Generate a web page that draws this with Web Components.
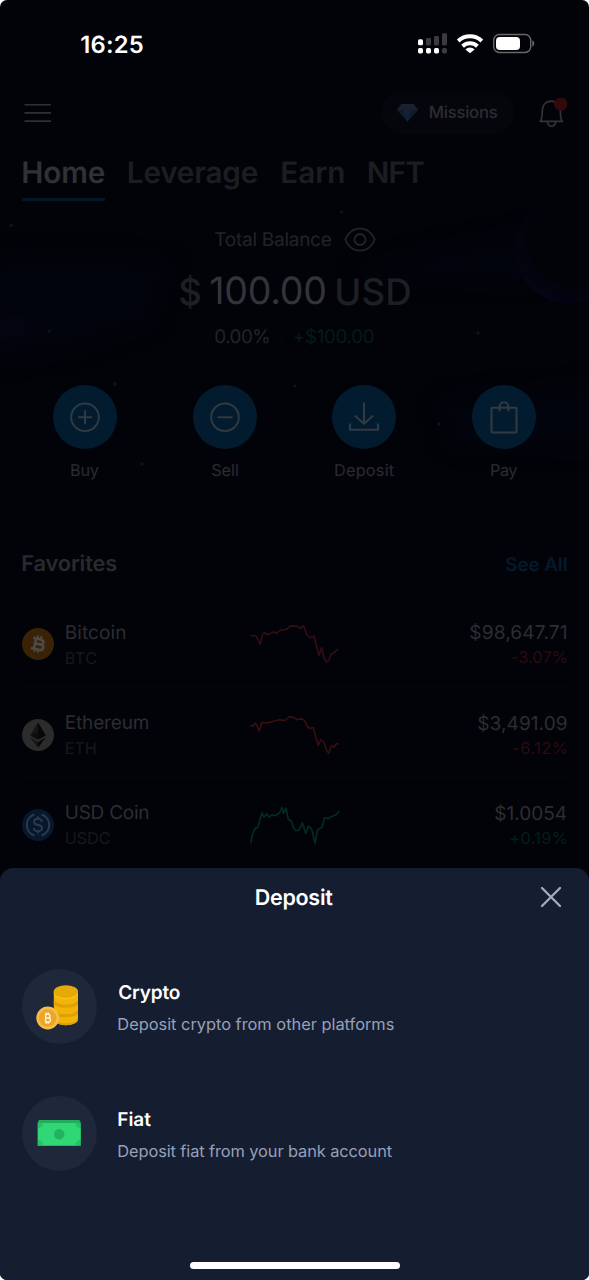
<!DOCTYPE html>
<html lang="en">
<head>
<meta charset="utf-8">
<title>Wallet</title>
<style>
html,body{margin:0;background:#fff}
body{width:589px;height:1280px;overflow:hidden;font-family:Inter,"Liberation Sans",sans-serif;text-rendering:geometricPrecision}
</style>
</head>
<body>
<wallet-app></wallet-app>

<script>
/* Single line of text whose tracking is adjusted so its ink spans `w` pixels. */
const ctx = document.createElement('canvas').getContext('2d');
class UiText extends HTMLElement {
  connectedCallback() {
    if (this.shadowRoot) return;
    const w = +this.getAttribute('w'), size = +this.getAttribute('s'), weight = this.getAttribute('wt') || 400;
    const text = this.textContent;
    ctx.font = `${weight} ${size}px Inter, "Liberation Sans", sans-serif`;
    ctx.textRendering = 'geometricPrecision';
    const m = ctx.measureText(text);
    const ink = m.actualBoundingBoxLeft + m.actualBoundingBoxRight;
    const track = (w - .6 - ink) / Math.max(1, text.length - 1);
    const root = this.attachShadow({ mode: 'open' });
    root.innerHTML = `<style>
      :host{display:block;width:${w}px;height:${Math.ceil(size * 1.2)}px;line-height:${Math.ceil(size * 1.2)}px;flex:none;
        font-size:${size}px;font-weight:${weight};color:${this.getAttribute('c') || '#fff'};white-space:pre}
      span{display:block;width:${w + 14}px;margin-left:${m.actualBoundingBoxLeft + .3}px;letter-spacing:${track.toFixed(3)}px}
    </style><span><slot></slot></span>`;
  }
}

const define = (name, html) => customElements.define(name, class extends HTMLElement {
  connectedCallback() {
    if (this.shadowRoot) return;
    const t = document.createElement('template');
    t.innerHTML = typeof html === 'function' ? html(this) : html;
    this.attachShadow({ mode: 'open' }).append(t.content.cloneNode(true));
  }
});

define('status-bar', `<style>
  :host{display:flex;box-sizing:border-box;height:88px;padding:0 54px 0 81px;align-items:center;justify-content:space-between}
  div{display:flex;align-items:center}
</style>
<ui-text w="62" s="23.800" wt="600">16:25</ui-text>
<div><svg width="118" height="24" viewBox="417 32 118 24">
  <g fill="#fff"><rect x="418" y="39.300" width="5" height="6" rx="1.500"/><rect x="418" y="48" width="5" height="5.400" rx="1.700"/><rect x="426" y="48" width="5" height="5.400" rx="1.700"/><rect x="434" y="48" width="5" height="5.400" rx="1.700"/></g>
  <g fill="#3b3b3e"><rect x="426" y="38" width="5" height="7.400" rx="1.300"/><rect x="434" y="36" width="5" height="9.400" rx="1.300"/><rect x="442" y="33.200" width="5" height="12.200" rx="1.300"/><rect x="442" y="48" width="5" height="5.400" rx="1.700"/></g>
  <g fill="none" stroke="#fff" stroke-width="4"><path d="M458.200 41a17 17 0 0 1 23.600 0"/><path d="M462.600 46.200a10.800 10.800 0 0 1 14.800 0"/></g>
  <path d="M465.400 49.400a6.500 6.500 0 0 1 9.200 0L470 53.300z" fill="#fff"/>
  <rect x="493.700" y="34.500" width="37" height="18" rx="5.600" fill="none" stroke="#68686b" stroke-width="1.400"/>
  <rect x="496" y="37" width="24" height="13" rx="3.800" fill="#fff"/>
  <path d="M532.300 40.300c2.600 1 2.600 5.400 0 6.400z" fill="#68686b"/>
</svg></div>`);

define('top-bar', `<style>
  :host{display:flex;box-sizing:border-box;height:49px;padding:0 21px 0 24px;align-items:center}
  svg{display:block;flex:none}
  .pill{display:flex;box-sizing:border-box;margin-left:auto;width:133px;height:43px;border-radius:22px;background:#05060b;align-items:center;padding-left:16px;gap:11.500px}
  .pill ui-text{margin-top:1px}
  .bell{margin-left:24px}
</style>
<svg width="28" height="20" viewBox="0 0 28 20" stroke="#2f3033" stroke-width="1.600"><path d="M.5 1.700h26.500M.5 9.900h26.500M.5 18.100h26.500"/></svg>
<div class="pill">
  <svg width="21" height="18" viewBox="0 0 21 18"><path d="M4.600 0h11.800L21 6 10.500 18 0 6z" fill="#111a2c"/><path d="M4.600 0h11.800L21 6H0z" fill="#182332"/><path d="M4.600 0 6 6l4.500-6L15 6l1.400-6L21 6H15l-4.500 12L6 6H0z" fill="#1e1e30"/><path d="M6 6h9l-4.500 12z" fill="#142035"/></svg>
  <ui-text w="68.500" s="16.700" wt="500" c="#2c2d31">Missions</ui-text>
</div>
<svg class="bell" width="30" height="30" viewBox="538 97 30 30"><g fill="none" stroke="#323337" stroke-width="1.700" stroke-linejoin="round"><path d="M540.200 120.300c1.700-1.600 1.900-3.500 1.900-8.300 0-7.300 3.300-11.800 9.200-11.800s9.200 4.500 9.200 11.800c0 4.800.2 6.700 1.900 8.300z"/><path d="M547.500 121c.3 2.800 1.800 4.200 4 4.200s3.700-1.400 4-4.200"/></g><circle cx="560.700" cy="103.200" r="6.600" fill="#34090e"/></svg>`);

define('tab-bar', `<style>
  :host{display:flex;box-sizing:border-box;height:71px;padding:18px 22px 0;align-items:flex-start}
  .on{box-sizing:border-box;width:83px;height:46px;border-bottom:3px solid #051626;padding-left:1px}
  .t{margin-left:23.500px}.u{margin-left:24px}
</style>
<div class="on"><ui-text w="82" s="29.700" wt="600" c="#303135">Home</ui-text></div>
<ui-text class="t" w="129.500" s="29.700" wt="600" c="#1c1d21">Leverage</ui-text>
<ui-text class="u" w="62.500" s="29.700" wt="600" c="#1c1d21">Earn</ui-text>
<ui-text class="u" w="56" s="29.700" wt="600" c="#1c1d21">NFT</ui-text>`);

define('night-sky', `<style>:host{display:block}svg{display:block}</style>
<svg width="589" height="320" viewBox="0 190 589 320">
  <defs><filter id="b" color-interpolation-filters="sRGB" x="-30%" y="-50%" width="160%" height="200%"><feGaussianBlur stdDeviation="10"/></filter>
  <radialGradient id="p" cx=".58" cy=".38" r=".65"><stop offset=".68" stop-color="#020308"/><stop offset=".9" stop-color="#030411"/><stop offset="1" stop-color="#040516"/></radialGradient></defs>
  <g filter="url(#b)" fill="#02040d"><path d="M-20 262Q80 250 170 264L150 322 70 350-20 362z"/><path d="M350 272 440 250 530 232V284L420 278z"/><path d="M440 400 600 385V450L450 445z"/></g>
  <path d="M0 319q15-8 28 0l22 14-50 8z" fill="#03040f"/>
  <circle cx="569" cy="249" r="54" fill="url(#p)"/>
  <g fill="#121318"><circle cx="11" cy="225.500" r="1.700"/><circle cx="49.500" cy="331" r="1.700"/><circle cx="341.500" cy="212" r="1.700"/><circle cx="478" cy="333" r="1.700"/><circle cx="115" cy="384" r="1.700"/><circle cx="142" cy="464" r="1.700"/><circle cx="295" cy="386" r="1.700"/><circle cx="439" cy="424" r="1.700"/></g>
</svg>`);

define('balance-panel', `<style>
  :host{display:block;height:177px;padding-top:9px;box-sizing:border-box}
  div{display:flex;align-items:center}
  .a{height:44px;padding-left:214px;gap:12px}
  .b{height:61px;padding-left:179px;gap:10.500px}
  .c{height:29px;padding-left:215px;gap:11.500px}
  .a ui-text{margin-top:1px}
  i{width:1px;height:14px;background:#05060b}
</style>
<div class="a"><ui-text w="118" s="19" c="#222327">Total Balance</ui-text>
<svg width="32" height="25" viewBox="0 0 32 25" fill="none" stroke="#232428" stroke-width="1.800"><path d="M1.200 12.500C4.500 5 9.500 1.300 16 1.300S27.500 5 30.800 12.500C27.500 20 22.500 23.700 16 23.700S4.500 20 1.200 12.500z"/><circle cx="16" cy="12.500" r="5.500"/></svg></div>
<div class="b"><ui-text w="20.500" s="36.500" wt="500" c="#1e1f23">$</ui-text><ui-text w="115.500" s="37.500" c="#333438">100.00</ui-text><ui-text w="74.500" s="36.500" wt="500" c="#1e1f23">USD</ui-text></div>
<div class="c"><ui-text w="54.500" s="18.800" c="#222327">0.00%</ui-text><i></i><ui-text w="80.500" s="18.800" c="#031b18">+$100.00</ui-text></div>`);

define('action-button', e => `<style>
  :host{display:flex;flex-direction:column;align-items:center;flex:1 1 0}
  .disc{width:64px;height:64px;border-radius:50%;background:#021b2e;margin-bottom:10.500px}
  svg{display:block}
</style>
<div class="disc"><svg width="64" height="64" viewBox="0 0 64 64" fill="none" stroke="#303a42" stroke-width="2">${{
  buy: '<circle cx="32" cy="32.300" r="13.800"/><path d="M25 32.300h14M32 25.300v14"/>',
  sell: '<circle cx="32" cy="32.300" r="13.800"/><path d="M24.500 32.300h15"/>',
  deposit: '<path d="M32 17.500v21M22.800 30.500l9.200 8.300 9.200-8.300M18 38.500v6.300h28v-6.300"/>',
  pay: '<rect x="19.500" y="22.800" width="25" height="24.700" rx="1"/><path d="M27.500 26.500v-4c0-7 9-7 9 0v4"/>'
}[e.getAttribute('icon')]}</svg></div>
<ui-text w="${e.getAttribute('w')}" s="16.300" c="#2b2c30">${e.getAttribute('label')}</ui-text>`);

define('action-row', `<style>:host{display:flex;box-sizing:border-box;height:151px;padding:0 15px}</style>
<action-button icon="buy" label="Buy" w="28.500"></action-button>
<action-button icon="sell" label="Sell" w="27.500"></action-button>
<action-button icon="deposit" label="Deposit" w="59.500"></action-button>
<action-button icon="pay" label="Pay" w="27"></action-button>`);

const coinIcons = {
  btc: `<circle cx="16" cy="16" r="16" fill="#3a2206"/><g transform="rotate(13 16 16)" fill="none" stroke="#4e4a47" stroke-width="2.600"><path d="M10 11h7.500c4.600 0 4.600 4.900 0 4.900H13h5c5.200 0 5.200 5.600 0 5.600h-8M13 11v10.500"/><path d="M14.200 7.500v3M17.700 7.500v3M14.200 21.500v3.200M17.700 21.500v3.200" stroke-width="1.800"/></g>`,
  eth: `<circle cx="16" cy="16" r="16" fill="#2c2c2d"/><path d="M16 3.300v14.900l-7.800-1.800z" fill="#151516"/><path d="M16 3.300l7.800 13.100L16 20.800z" fill="#08080a"/><path d="M8.200 16.400 16 13v7.800z" fill="#0d0d0e"/><path d="M8.200 18.500 16 23v5.700z" fill="#151516"/><path d="M23.800 18.500 16 23v5.700z" fill="#08080a"/>`,
  usdc: `<circle cx="16" cy="16" r="16" fill="#07182d"/><g fill="none" stroke="#2e3b4a" stroke-width="1.900"><path d="M12.300 5.500a11.100 11.100 0 0 0 0 21M19.700 5.500a11.100 11.100 0 0 1 0 21"/><path d="M20 12.800c-.3-2-1.700-3-4-3-5 0-5.300 5.200-.6 6 6.300 1 5.800 6.400.6 6.400-2.500 0-4-1.100-4.200-3.200M16 7.300v2.500M16 22v2.600"/></g>`
};

define('coin-row', e => {
  const a = n => e.getAttribute(n);
  return `<style>
  :host{display:grid;box-sizing:border-box;height:90.300px;padding-top:5.500px;margin:0 22px;grid-template-columns:43.500px 184.500px 90px 1fr;align-items:center;border-bottom:1px solid ${a('last') !== null ? 'transparent' : '#07080c'}}
  svg{display:block}
  .n{display:flex;flex-direction:column;gap:4px}
  .r{align-items:flex-end;gap:3px}
</style>
<svg width="32" height="32" viewBox="0 0 32 32">${coinIcons[a('icon')]}</svg>
<div class="n"><ui-text w="${a('nw')}" s="19" c="#2c2d31">${a('name')}</ui-text><ui-text w="${a('tw')}" s="16.200" c="#17181c">${a('ticker')}</ui-text></div>
<svg width="90" height="50" viewBox="${a('view')}" fill="none" stroke="${a('line')}" stroke-width="4.800" stroke-linejoin="round"><polyline points="${a('pts')}"/></svg>
<div class="n r"><ui-text w="${a('pw')}" s="19.100" c="#2c2d31">${a('price')}</ui-text><ui-text w="${a('cw')}" s="16.300" c="${a('cc')}">${a('change')}</ui-text></div>`;
});

define('favorites-list', `<style>:host{display:block}header{display:flex;justify-content:space-between;align-items:center;height:56px;padding:0 22px;margin-bottom:5px}</style>
<header><ui-text w="95.500" s="21.800" wt="600" c="#292a2e">Favorites</ui-text><ui-text w="62" s="18.800" wt="600" c="#04192c">See All</ui-text></header>
<coin-row icon="btc" name="Bitcoin" nw="60" ticker="BTC" tw="31" price="$98,647.71" pw="97" change="-3.07%" cw="55.500" cc="#2e0a0f" line="#360d14" view="750 268.500 270 150"
 pts="751,318 768,319 774,330 780,345 788,313 795,309 800,316 810,313 820,307 830,311 840,303 860,299 870,290 892,290 900,297 911,289 920,315 930,324 942,320 948,345 957,377 965,354 972,385 980,398 986,393 994,373 1005,368 1010,361 1016,361"></coin-row>
<coin-row icon="eth" name="Ethereum" nw="83.500" ticker="ETH" tw="30.500" price="$3,491.09" pw="89" change="-6.12%" cw="54" cc="#2e0a0f" line="#3a0d12" view="750 28.500 270 150"
 pts="751,74 758,77 767,68 778,91 785,66 805,67 820,62 838,58 855,60 867,49 880,50 890,57 905,55 915,61 922,78 930,84 940,81 947,110 955,135 962,117 972,126 980,151 986,158 995,135 1002,141 1009,129 1016,131"></coin-row>
<coin-row last icon="usdc" name="USD Coin" nw="83" ticker="USDC" tw="44.500" price="$1.0054" pw="72" change="+0.19%" cw="57" cc="#032016" line="#032d20" view="750 298.500 270 150"
 pts="753,428 757,403 766,382 773,382 780,356 786,337 792,350 800,340 808,350 815,343 825,346 838,337 846,321 851,338 858,323 865,357 875,363 880,382 888,391 897,389 907,367 917,399 925,377 935,386 945,428 953,388 967,379 973,352 985,354 995,348 1008,343 1018,332"></coin-row>`);

define('sheet-option', e => `<style>
  :host{display:flex;height:75px;align-items:center;gap:21px}
  .disc{width:75px;height:75px;border-radius:50%;background:#1f273b;flex:none}
  .t{display:flex;flex-direction:column;gap:10px;padding-top:1px}
  svg{display:block}
</style>
<div class="disc"><slot name="icon"></slot></div>
<div class="t"><ui-text w="${e.getAttribute('tw')}" s="19" wt="600" c="#fff">${e.getAttribute('label')}</ui-text>
<ui-text w="${e.getAttribute('dw')}" s="16.400" c="#98a0b8">${e.getAttribute('desc')}</ui-text></div>`);

define('bottom-sheet', `<style>
  :host{display:flex;flex-direction:column;box-sizing:border-box;height:412.500px;background:#151d30;border-radius:13px 13px 0 0}
  header{display:grid;grid-template-columns:1fr auto 1fr;align-items:center;height:59px;padding:0 27px 0 27px}
  header svg{justify-self:end}
  header ui-text{margin-top:1px}
  .list{display:flex;flex-direction:column;gap:52px;padding:42.500px 22px 0}
  svg{display:block}
  .bar{width:210px;height:7px;border-radius:4px;background:#fff;margin:auto auto 11px}
</style>
<header><span></span><ui-text w="78" s="21.500" wt="600" c="#fff">Deposit</ui-text>
<svg width="22" height="22" viewBox="0 0 22 22" stroke="#a3abc2" stroke-width="2.300" stroke-linecap="round"><path d="M2 2l18 18M20 2 2 20"/></svg></header>
<div class="list">
<sheet-option label="Crypto" tw="62" desc="Deposit crypto from other platforms" dw="276">
  <svg slot="icon" width="75" height="75" viewBox="22 969 75 75">
    <defs><clipPath id="stack"><path d="M53.800 991.500v27.500c0 8.200 24.200 8.200 24.200 0v-27.500z"/></clipPath></defs>
    <g clip-path="url(#stack)"><path d="M53 991h26v36H53z" fill="#f3b408"/>
    <g fill="none" stroke="#dfa106" stroke-width="3.200"><path d="M53.800 1001c0 7 24.200 7 24.200 0M53.800 1010.500c0 7 24.200 7 24.200 0M53.800 1019.500c0 7 24.200 7 24.200 0"/></g></g>
    <path d="M53.800 991.500v2c0 7.700 24.200 7.700 24.200 0v-2z" fill="#fac217"/>
    <ellipse cx="65.900" cy="991.500" rx="12.100" ry="6.300" fill="#e5a908"/>
    <circle cx="47.700" cy="1018" r="11.400" fill="#f6bd48"/><circle cx="47.700" cy="1018" r="8.700" fill="#eaa52a"/>
    <path d="M45.600 1014.200h2.400c2.700 0 2.700 3.800 0 3.800h-2.400h2.700c2.900 0 2.900 4 0 4h-2.700zM46.400 1012.500v1.700M48.400 1012.500v1.700M46.400 1022v1.700M48.400 1022v1.700" fill="none" stroke="#fff3d3" stroke-width="1.400"/>
  </svg></sheet-option>
<sheet-option label="Fiat" tw="33.500" desc="Deposit fiat from your bank account" dw="275">
  <svg slot="icon" width="75" height="75" viewBox="22 1096 75 75">
    <path d="M39 1120h40.500l1.300 3v23H37.500v-23z" fill="#21ad5c"/>
    <rect x="38" y="1123" width="42.500" height="22.200" fill="#27c167"/>
    <path d="M43 1123h32.500c0 3 2 5 5 5.500v11c-3 .5-5 2.700-5 5.700H43c0-3-2-5.200-5-5.700v-11c3-.5 5-2.500 5-5.500z" fill="#2fd875"/>
    <circle cx="59.200" cy="1134.200" r="5.200" fill="#23b160"/>
  </svg></sheet-option>
</div><div class="bar"></div>`);

define('wallet-app', `<style>
  :host{display:flex;flex-direction:column;justify-content:space-between;position:relative;width:589px;height:1280px;background:#020308;border-radius:7px;overflow:hidden}
  night-sky{position:absolute;left:0;top:190px}
  main{position:relative;height:867.500px;overflow:hidden}
</style>
<night-sky></night-sky>
<main><status-bar></status-bar><top-bar></top-bar><tab-bar></tab-bar><balance-panel></balance-panel><action-row></action-row><favorites-list></favorites-list></main>
<bottom-sheet></bottom-sheet>`);

customElements.define('ui-text', UiText);
</script>
</body>
</html>
